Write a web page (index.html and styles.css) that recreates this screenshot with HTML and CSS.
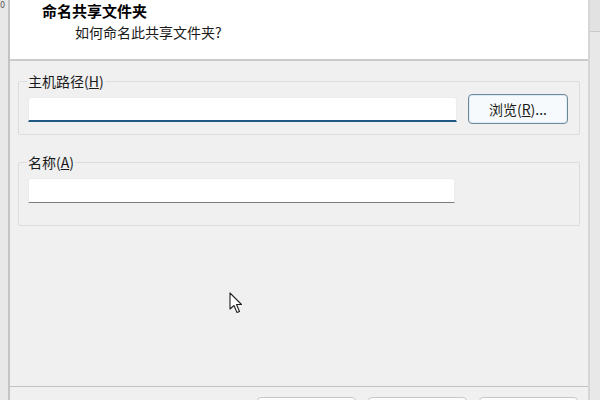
FILE: index.html
```html
<!DOCTYPE html>
<html lang="zh-CN">
<head>
    <meta charset="UTF-8">
    <title>命名共享文件夹</title>
    <link rel="stylesheet" href="styles.css">
</head>
<body>
    <div class="screen">
        <div class="side side-left"><span class="stray">0</span></div>

        <div class="dialog">
            <div class="dialog-head">
                <div class="title">命名共享文件夹</div>
                <div class="subtitle">如何命名此共享文件夹?</div>
            </div>

            <div class="dialog-body">
                <fieldset class="group group-path">
                    <legend>主机路径(<u>H</u>)</legend>
                    <div class="field-row">
                        <input type="text" class="text-input focused">
                        <button class="btn btn-browse">浏览(<u>R</u>)...</button>
                    </div>
                </fieldset>

                <fieldset class="group group-name">
                    <legend>名称(<u>A</u>)</legend>
                    <input type="text" class="text-input">
                </fieldset>
            </div>

            <div class="dialog-foot">
                <button class="btn btn-foot"></button>
                <button class="btn btn-foot"></button>
                <button class="btn btn-foot"></button>
            </div>

            <!-- mouse pointer left on the screenshot -->
            <svg class="cursor" width="14" height="22" viewBox="0 0 14 22">
                <path d="M1 1 L1 17 L5 13.5 L8 20.5 L10.5 19.5 L7.5 12.5 L12.5 12.5 Z" fill="#fff" stroke="#222" stroke-width="1.1" stroke-linejoin="round"/>
            </svg>
        </div>

        <div class="side side-right"><div class="side-top"></div></div>
    </div>
</body>
</html>
```

FILE: styles.css
```css
body {
    margin: 0;
    font-family: "Noto Sans CJK SC", "Noto Sans", sans-serif;
    font-size: 14px;
    color: #1a1a1a;
    background-color: #f0f0f0;
    overflow: hidden;
}

.screen {
    display: flex;
    width: 600px;
    height: 400px;
    overflow: hidden;
}

.side {
    flex: none;
    background-color: #e8e8e8;
}

.side-left {
    width: 8px;
    border-right: 2px solid #c4c4c4;
}

.stray {
    display: block;
    padding-top: 1px;
    font-family: "DejaVu Sans", sans-serif;
    font-size: 8px;
    line-height: 10px;
    color: #555;
}

.side-right {
    width: 10px;
    border-left: 2px solid #d6d6d6;
}

.side-top {
    height: 31px;
    border-bottom: 1px solid #c9c9c9;
    background-color: #e2e2e2;
}

.dialog {
    position: relative;
    flex: none;
    width: 578px;
    height: 400px;
    display: flex;
    flex-direction: column;
    background-color: #f0f0f0;
}

.dialog-head {
    flex: none;
    box-sizing: border-box;
    height: 61px;
    background-color: #ffffff;
    border-bottom: 2px solid #cbcbcb;
    padding-left: 32px;
    padding-top: 1px;
}

.title {
    font-size: 15px;
    font-weight: bold;
    line-height: 20px;
    color: #000;
}

.subtitle {
    margin-top: 2px;
    margin-left: 33px;
    line-height: 18px;
}

.dialog-body {
    flex: none;
    box-sizing: border-box;
    height: 325px;
    padding: 0 8px;
}

.group {
    margin: 0;
    border: 1px solid #dcdcdc;
    border-radius: 2px;
    padding: 0 9px;
}

.group legend {
    padding: 0 1px;
    margin-left: -1px;
    line-height: 16px;
}

.group-path {
    margin-top: 12px;
    padding-top: 5px;
    padding-bottom: 10px;
}

.group-name {
    margin-top: 19px;
    padding-top: 8px;
    padding-bottom: 22px;
}

.field-row {
    display: flex;
    align-items: center;
    gap: 11px;
}

.text-input {
    box-sizing: border-box;
    width: 427px;
    height: 25px;
    margin: 0;
    padding: 0 6px;
    border: 1px solid #ececec;
    border-bottom: 1px solid #7d7d7d;
    border-radius: 3px 3px 0 0;
    background-color: #ffffff;
    font: inherit;
    outline: none;
}

.text-input.focused {
    width: 429px;
    height: 25px;
    border-bottom: 2px solid #1f5a85;
}

.btn {
    box-sizing: border-box;
    margin: 0;
    border-radius: 4px;
    font: inherit;
    color: #1a1a1a;
    cursor: pointer;
}

.btn-browse {
    width: 100px;
    height: 30px;
    border: 1px solid #6f8799;
    background-color: #f7fafc;
    box-shadow: inset 0 0 0 1px #dcedf7;
}

.dialog-foot {
    flex: none;
    border-top: 1px solid #c3c3c3;
    padding: 10px 10px 0 0;
    display: flex;
    justify-content: flex-end;
    gap: 12px;
}

.btn-foot {
    width: 99px;
    height: 30px;
    flex: none;
    border: 1px solid #c8c8c8;
    background-color: #fdfdfd;
}

.cursor {
    position: absolute;
    left: 219px;
    top: 292px;
}
```
